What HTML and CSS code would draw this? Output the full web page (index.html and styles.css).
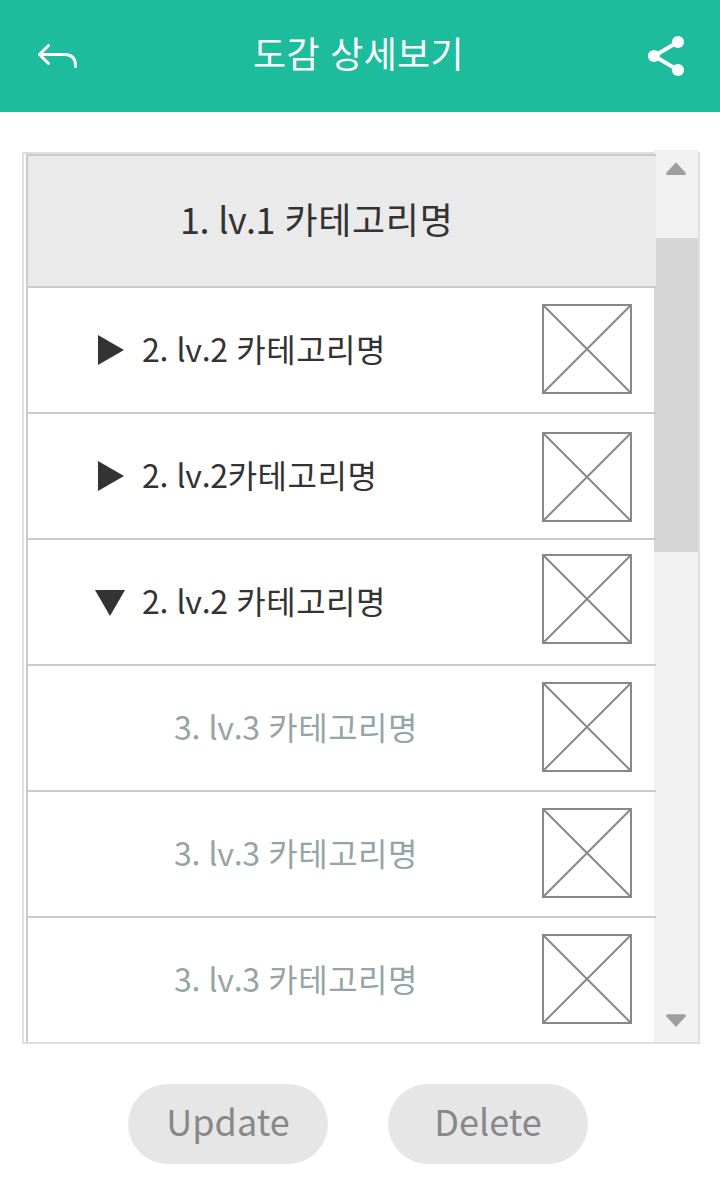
FILE: index.html
```html
<!DOCTYPE html>
<html lang="ko">
<head>
<meta charset="utf-8">
<title>도감 상세보기</title>
<link rel="stylesheet" href="styles.css">
</head>
<body>
<svg class="defs" width="0" height="0">
  <symbol id="thumb" viewBox="0 0 90 90">
    <path d="M1 1L89 89M89 1L1 89" fill="none" stroke="#888" stroke-width="2"/>
    <rect x="1" y="1" width="88" height="88" fill="none" stroke="#888" stroke-width="2"/>
  </symbol>
</svg>
<div class="app">
  <header class="topbar">
    <svg class="back" width="44" height="32" viewBox="0 0 44 32" fill="none" stroke="#fff" stroke-width="3" stroke-linecap="round" stroke-linejoin="round"><path d="M12.5 5.5L3.5 14.5L12.5 23.5"/><path d="M4 14.5H30Q39.5 15.5 39.5 25.5V26.5"/></svg>
    <h1 class="title">도감 상세보기</h1>
    <svg class="share" width="40" height="42" viewBox="0 0 40 42"><path d="M32 7L8 21L32 35" fill="none" stroke="#fff" stroke-width="3.8"/><g fill="#fff"><circle cx="32" cy="7" r="6.1"/><circle cx="8" cy="21" r="6.1"/><circle cx="32" cy="35" r="6.1"/></g></svg>
  </header>
  <main class="panel">
    <div class="list">
      <div class="row head"><span class="label"><span class="num">1. lv.1 </span>카테고리명</span></div>
      <div class="row"><svg class="marker" width="30" height="30"><path d="M3 0L29 15L3 30Z"/></svg><span class="label"><span class="num">2. lv.2 </span>카테고리명</span><svg class="pic"><use href="#thumb"/></svg></div>
      <div class="row"><svg class="marker" width="30" height="30"><path d="M3 0L29 15L3 30Z"/></svg><span class="label"><span class="num">2. lv.2</span>카테고리명</span><svg class="pic low"><use href="#thumb"/></svg></div>
      <div class="row"><svg class="marker" width="30" height="30"><path d="M0 3H30L15 29Z"/></svg><span class="label"><span class="num">2. lv.2 </span>카테고리명</span><svg class="pic high"><use href="#thumb"/></svg></div>
      <div class="row sub"><span class="label"><span class="num">3. lv.3 </span>카테고리명</span><svg class="pic"><use href="#thumb"/></svg></div>
      <div class="row sub"><span class="label"><span class="num">3. lv.3 </span>카테고리명</span><svg class="pic"><use href="#thumb"/></svg></div>
      <div class="row sub"><span class="label"><span class="num">3. lv.3 </span>카테고리명</span><svg class="pic"><use href="#thumb"/></svg></div>
    </div>
    <div class="scrollbar">
      <div class="cap"><svg width="20" height="13"><path d="M10 0.2L19.6 10.8Q20.4 13 18 13H2Q-0.4 13 0.4 10.8Z"/></svg></div>
      <div class="handle"></div>
      <div class="cap end"><svg width="20" height="13"><path d="M10 13L0.4 2.6Q-0.4 0.3 2 0.3H18Q20.4 0.3 19.6 2.6Z"/></svg></div>
    </div>
  </main>
  <footer class="actions">
    <button class="btn">Update</button>
    <button class="btn">Delete</button>
  </footer>
</div>
</body>
</html>
```
FILE: styles.css
```css
* { box-sizing: border-box; }
body { margin: 0; background: #fff; font-family: "Noto Sans CJK KR", sans-serif; color: #333; }
svg { display: block; flex: none; }
.defs { position: absolute; }
.app { width: 720px; height: 1200px; display: flex; flex-direction: column; overflow: hidden; }
.topbar { height: 112px; flex: none; background: #1dbc9c; display: flex; align-items: center; padding: 0 34px 0 36px; }
.title { margin: 0 auto 0 173px; font-size: 36px; line-height: 52px; font-weight: 400; letter-spacing: 0.3px; color: #fff; white-space: nowrap; padding-bottom: 8px; }
.panel { flex: none; height: 892px; margin: 40px 20px 0 22px; border: 2px solid #dfdfdf; display: flex; }
.list { flex: none; width: 630px; margin: 0 -2px 0 2px; border: solid #cbcbcb; border-width: 2px 0 0 2px; position: relative; z-index: 1; }
.row { height: 126px; border-bottom: 2px solid #cbcbcb; display: flex; align-items: center; padding: 0 24px 0 67px; }
.row:last-child { height: 124px; border-bottom: 0; }
.label { font-size: 32px; line-height: 46px; letter-spacing: 0.5px; white-space: pre; padding-bottom: 4px; }
.num { letter-spacing: -0.35px; }
.head { height: 132px; background: #eaeaea; padding-left: 152px; }
.head .label { font-size: 36px; letter-spacing: 0.7px; padding-bottom: 7px; }
.head .num { letter-spacing: -0.6px; }
.marker { fill: #333; margin-right: 17px; }
.sub { padding-left: 146px; color: #95a5a6; }
.pic { width: 90px; height: 90px; margin: 16px 0 0 auto; align-self: flex-start; }
.pic.low { margin-top: 18px; }
.pic.high { margin-top: 14px; }
.scrollbar { flex: none; width: 44px; height: 892px; margin-top: -4px; background: #f1f1f1; display: flex; flex-direction: column; fill: #9e9e9e; }
.cap { height: 88px; padding: 12px; }
.handle { height: 314px; background: #d6d6d6; }
.end { margin-top: auto; display: flex; align-items: flex-end; padding-bottom: 15px; }
.actions { margin-top: 40px; padding-left: 128px; display: flex; gap: 60px; }
.btn { width: 200px; height: 80px; border: 0; border-radius: 40px; background: #e6e6e6; color: #888; font: 36px/52px "Noto Sans CJK KR", sans-serif; padding: 0 0 8px; }
```
